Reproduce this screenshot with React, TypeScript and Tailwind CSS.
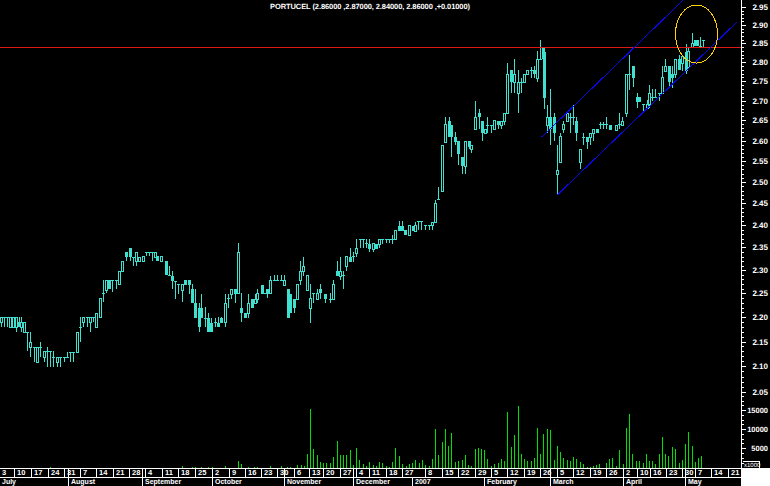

import React from 'react';

type C = [number, number, number, number, number, number];

// [x in zoom px, wick top, wick bottom, body top, body bottom, filled]
const seg1: C[] = [
[4,232,260,232,247,0],[13,232,260,232,232,0],[22,232,260,232,232,0],[31,232,262,232,262,0],[40,232,262,232,262,0],[49,232,275,232,262,0],
[58,232,262,247,262,1],[64,232,275,247,262,0],[73,247,277,247,277,0],[82,277,332,277,277,0],[91,277,350,307,322,0],[103,322,365,322,322,0],
[112,322,365,322,365,0],[121,307,350,322,322,0],[133,334,365,334,350,0],[142,322,380,334,334,0],[151,334,380,334,334,0],[160,334,380,350,350,0],
[172,350,380,350,365,0],[181,350,380,350,350,0],[193,350,365,350,350,0],[202,335,350,350,350,0],[211,335,365,335,335,0],[220,335,365,335,335,0],
[232,277,335,277,335,0],[241,232,305,262,262,0],[250,232,262,232,247,0],[262,232,262,232,232,0],[271,232,275,232,247,0],[280,232,247,232,232,0],
[289,220,262,220,262,0],[301,175,232,175,232,0],[310,120,187,160,160,0],[319,120,160,120,150,0],[328,120,147,120,147,1],[337,120,157,120,120,0],
[349,120,147,120,120,0],[358,93,133,93,133,0],[367,63,93,63,93,0],[379,36,63,36,50,1],[391,24,63,24,50,1],[400,50,78,50,50,0],
[409,36,78,36,63,0],[418,50,63,50,63,0],[430,48,63,48,63,0],[439,36,48,36,36,0],[448,36,48,36,36,0],[457,36,63,36,36,0],
[466,36,50,36,50,0],[472,48,63,48,63,1],[484,48,63,48,63,0],[499,63,106,63,106,1],[508,78,106,106,106,0],[517,93,147,108,122,1],
[526,122,177,122,122,0],[535,132,162,132,132,0],[547,132,187,132,150,0],[556,120,135,120,135,1],[568,120,162,120,135,1],[577,132,190,147,190,1],
[586,147,234,190,234,1],[598,190,275,205,262,1],[604,162,234,205,234,1],[616,202,262,234,234,0],[625,220,277,234,277,1],[634,234,277,250,277,1],
[646,234,262,247,247,0],[655,232,262,250,262,1],[664,232,250,234,250,1],[676,162,260,190,247,0],[685,162,205,175,175,0],[694,148,177,148,162,0],
[706,148,190,148,162,1],[715,9,160,36,160,0],[724,160,245,205,220,1],[736,220,234,220,234,1],[745,162,234,190,220,0],[757,178,205,178,205,1],
[766,162,190,178,190,0],[772,148,190,160,177,0],
];
const seg2: C[] = [
[5,255,282,255,282,1],[13,280,282,280,280,0],[22,267,295,267,282,1],[31,228,280,240,280,0],[43,225,240,240,240,0],[52,225,240,240,240,0],
[64,225,240,240,240,0],[71,225,255,240,255,0],[85,267,353,267,353,1],[91,282,340,282,340,1],[103,297,338,297,325,1],[112,252,297,252,297,0],
[121,183,255,213,240,0],[130,170,228,198,213,0],[142,225,270,225,270,0],[151,252,368,295,323,0],[160,280,308,280,280,0],[172,267,297,280,297,0],
[181,252,297,267,280,1],[195,282,308,282,297,1],[211,280,308,297,297,0],[220,240,297,252,297,0],[232,183,228,213,228,1],[241,171,240,213,228,0],
[250,213,267,225,225,0],[259,168,213,168,198,0],[271,144,185,170,185,1],[280,156,185,168,168,0],[289,118,170,145,158,0],[301,118,145,118,118,0],
[310,118,145,118,118,0],[319,118,145,130,130,0],[328,118,156,132,147,1],[340,130,156,130,147,0],[349,132,147,132,147,1],[358,118,145,118,132,0],
[367,118,132,118,118,0],[379,118,130,118,118,0],[388,118,130,118,118,0],[397,105,132,118,118,0],[406,90,118,90,118,0],[418,63,92,78,92,1],
[427,63,92,78,92,1],[436,90,105,90,105,1],[448,76,105,76,105,0],[460,78,92,78,92,1],[466,66,92,76,92,0],[475,63,90,63,63,0],
[484,63,90,63,63,0],[496,76,90,76,76,0],[508,76,90,76,76,0],[517,66,90,66,76,0],[526,0,66,10,66,0],
];
const seg3: C[] = [
[25,472,510,508,508,0],[37,345,482,345,482,0],[46,262,335,283,335,0],[58,262,320,273,320,1],[64,285,380,285,320,1],[76,305,345,320,335,1],
[85,333,405,333,372,1],[97,380,432,380,408,1],[106,333,432,333,408,0],[118,333,358,333,350,1],[124,345,370,345,358,0],[136,213,297,262,297,0],
[146,237,297,250,262,1],[157,273,333,273,308,1],[166,297,308,297,308,0],[172,262,308,285,285,0],[184,285,308,285,285,0],[193,270,297,270,297,0],
[205,273,297,273,285,1],[214,273,297,273,285,0],[223,250,285,250,273,0],[232,98,250,133,250,0],[244,120,190,120,155,1],[253,87,190,133,155,0],
[265,120,250,155,190,0],[274,145,190,155,155,0],[283,133,155,133,155,0],[292,120,133,120,133,0],[304,110,145,120,120,0],[313,108,145,120,133,1],
[322,63,155,87,145,0],[331,30,87,87,87,0],[340,55,87,55,87,1],[343,65,237,65,203,1],[352,225,310,262,285,0],[361,178,345,262,297,1],
[373,250,333,262,308,1],[382,345,495,420,433,0],[391,310,395,318,395,0],[400,273,310,283,297,0],[412,250,273,250,273,0],[421,250,308,260,260,0],
[430,225,285,260,260,0],[439,262,333,273,308,1],[451,358,417,358,395,0],[460,310,345,320,320,0],[472,320,357,320,335,1],[481,308,345,308,322,0],
[490,297,333,297,308,0],[502,297,310,297,308,1],
];
const seg4: C[] = [
[31,365,388,372,372,0],[40,365,388,372,372,0],[49,352,388,372,372,0],[61,375,390,375,390,1],[79,375,390,375,390,0],[88,340,388,372,372,0],
[97,352,375,362,375,0],[107,222,350,222,338,0],[118,165,270,222,222,0],[130,198,260,198,233,1],[142,280,325,290,305,1],[148,290,305,290,305,1],
[160,313,335,313,313,0],[172,300,325,313,325,0],[178,255,325,280,313,0],[187,268,303,290,290,0],[196,268,290,290,290,0],[208,280,303,280,280,0],
[217,197,280,232,280,0],[226,178,212,198,212,0],[238,198,265,198,245,1],[247,198,265,222,233,1],[256,178,233,178,222,0],[268,165,210,178,210,1],
[277,167,212,167,188,0],[289,132,222,155,212,1],[295,145,200,153,200,0],[307,98,140,130,140,0],[316,120,138,120,138,1],[322,120,138,120,138,1],
[331,112,138,138,138,0],[340,120,140,120,120,0],
];

const candles: { x: number; t: number; b: number; bt: number; bb: number; f: number }[] = [];
const add = (s: C[], ox: number, oy: number) =>
  s.forEach(([zx, t, b, bt, bb, f]) =>
    candles.push({
      x: Math.round(ox + zx / 3),
      t: Math.round(oy + t / 3),
      b: Math.round(oy + b / 3),
      bt: Math.round(oy + bt / 3),
      bb: Math.round(oy + bb / 3),
      f,
    }),
  );
add(seg1, 0, 240);
add(seg2, 260, 200);
add(seg3, 430, 30);
add(seg4, 590, 0);

const vols: [number, number, [number, number][]][] = [
  [0, 400, [[151,201],[547,198],[577,201],[586,201],[604,201],[625,201],[637,201],[676,198],[715,183],[724,192],[745,201],[763,201],[772,201]]],
  [260, 400, [[31,198],[64,198],[82,201],[91,201],[112,195],[124,195],[133,198],[142,162],[151,27],[160,147],[172,165],[181,186],[190,189],[199,189],[211,189],[220,171],[232,123],[241,165],[250,165],[259,165],[271,150],[280,195],[289,144],[298,180],[310,192],[319,198],[328,186],[340,195],[349,198],[358,186],[367,189],[379,198],[388,201],[397,186],[406,144],[418,168],[427,192],[439,198],[448,192],[457,189],[466,180],[478,189],[487,180],[496,195],[508,198],[517,177],[526,87],[535,165],[547,126],[556,87],[565,138],[574,99],[586,186],[595,183],[607,180],[616,165],[625,195],[634,198],[646,147],[655,144],[664,147],[673,150],[682,177],[694,198],[703,192],[715,189],[724,177],[733,183],[742,36]]],
  [510, 400, [[4,140],[13,105],[25,18],[34,162],[43,177],[52,183],[64,183],[73,174],[82,84],[91,162],[100,102],[112,87],[121,90],[133,180],[142,138],[151,156],[160,174],[172,180],[181,183],[190,171],[199,177],[211,186],[220,192],[232,201],[241,201],[250,198],[259,195],[268,192],[289,189],[298,177],[307,174],[319,198],[328,150],[340,192],[349,84],[358,42],[367,162],[379,183],[388,183],[400,189],[409,162],[418,183],[427,183],[436,192],[448,162],[457,111],[466,162],[475,168],[487,141],[496,147],[508,189],[517,180],[526,132],[535,96],[547,138],[556,186],[565,174],[574,168]]],
];

const priceY = (p: number) => Math.round(7 + (Math.log(2.95) - Math.log(p)) * 1057.6);
const priceLabels = ['2.95','2.90','2.85','2.80','2.75','2.70','2.65','2.60','2.55','2.50','2.45','2.40','2.35','2.30','2.25','2.20','2.15','2.10','2.05'];
const minorTicks: number[] = [];
for (let i = 205; i <= 295; i++) if (i % 5 !== 0) minorTicks.push(priceY(i / 100));
const volLabels: [string, number][] = [['15000', 410], ['10000', 429], ['5000', 448]];
const volMinor = [396, 401, 405, 415, 420, 424, 434, 439, 443, 453, 458, 463];

const days: [number, string][] = [
[0,'3'],[14,'10'],[31,'17'],[48,'24'],[64,'31'],[68,''],[80,'7'],[96,'14'],[113,'21'],[129,'28'],[142,''],[145,'4'],[162,'11'],[178,'18'],[195,'25'],[212,'2'],[229,'9'],[245,'16'],[261,'23'],[277,'30'],[284,''],[294,'6'],[309,'13'],[323,'20'],[340,'27'],[353,''],[356,'4'],[369,'11'],[386,'18'],[402,'27'],[425,'8'],[442,'15'],[458,'22'],[475,'29'],[491,'5'],[507,'12'],[524,'19'],[540,'26'],[550,''],[557,'5'],[573,'12'],[590,'19'],[606,'26'],[623,'2'],[637,'10'],[650,'16'],[666,'23'],[682,'30'],[685,''],[695,'7'],[711,'14'],[728,'21'],
];
const months: [number, string][] = [
[0,'July'],[68,'August'],[142,'September'],[212,'October'],[284,'November'],[353,'December'],[412,'2007'],[484,'February'],[550,'March'],[623,'April'],[685,'May'],
];

const TEAL = '#40e0d0';
const font = '"Liberation Sans", Arial, sans-serif';

function Chart() {
  return (
    <svg width={770} height={468} viewBox="0 0 770 468" className="block shrink-0" shapeRendering="crispEdges">
      <text x={370} y={9} textAnchor="middle" fill="#fff" fontFamily={font} fontSize={7.5} fontWeight={700} textLength={200} lengthAdjust="spacing" textRendering="geometricPrecision">
        PORTUCEL (2.86000 ,2.87000, 2.84000, 2.86000 ,+0.01000)
      </text>
      {vols.map(([ox, oy, list]) =>
        list.map(([zx, zy]) => {
          const x = Math.round(ox + zx / 3);
          const y = Math.round(oy + zy / 3);
          return <rect key={`${ox}-${zx}`} x={x} y={y} width={1} height={468 - y} fill="#00e000" />;
        }),
      )}
      {candles.map((c, i) => (
        <g key={i} fill={TEAL}>
          <rect x={c.x} y={c.t} width={1} height={Math.max(c.b - c.t, 1)} />
          {c.bt === c.bb ? (
            <rect x={c.x - 1} y={c.bt} width={3} height={1} />
          ) : c.f ? (
            <rect x={c.x - 1} y={c.bt} width={3} height={c.bb - c.bt} />
          ) : (
            <>
              <rect x={c.x - 1} y={c.bt} width={3} height={c.bb - c.bt + 1} />
              <rect x={c.x} y={c.bt + 1} width={1} height={Math.max(c.bb - c.bt - 1, 0)} fill="#000" />
            </>
          )}
        </g>
      ))}
      <line x1={0} y1={47.5} x2={741} y2={47.5} stroke="#e01818" strokeWidth={1} />
      <line x1={541.7} y1={137} x2={683.3} y2={0} stroke="#0808e8" strokeWidth={1} />
      <line x1={557.3} y1={195} x2={737.3} y2={21.7} stroke="#0808e8" strokeWidth={1} />
      <ellipse cx={696.5} cy={34} rx={21} ry={29} fill="none" stroke="#ffd400" strokeWidth={1} />
      <rect x={741} y={0} width={1} height={468} fill="#fff" />
      {minorTicks.map((y) => (
        <rect key={y} x={741} y={y} width={3} height={1} fill="#fff" />
      ))}
      {volMinor.map((y) => (
        <rect key={`v${y}`} x={741} y={y} width={3} height={1} fill="#fff" />
      ))}
      {priceLabels.map((p) => (
        <g key={p}>
          <rect x={741} y={priceY(parseFloat(p))} width={5} height={1} fill="#fff" />
          <text x={768} y={priceY(parseFloat(p)) + 3} textAnchor="end" fill="#fff" fontFamily={font} fontSize={8} fontWeight={700} textRendering="geometricPrecision">
            {p}
          </text>
        </g>
      ))}
      {volLabels.map(([l, y]) => (
        <g key={l}>
          <rect x={741} y={y} width={5} height={1} fill="#fff" />
          <text x={768} y={y + 3} textAnchor="end" fill="#fff" fontFamily={font} fontSize={7.5} fontWeight={700} textRendering="geometricPrecision">
            {l}
          </text>
        </g>
      ))}
      <rect x={743} y={461} width={16} height={1} fill="#fff" />
      <rect x={759} y={461} width={1} height={7} fill="#fff" />
      <text x={744} y={467} fill="#fff" fontFamily={font} fontSize={6} textRendering="geometricPrecision">
        x1000
      </text>
    </svg>
  );
}

function AxisRow({ items, end, small }: { items: [number, string][]; end: number; small?: boolean }) {
  return (
    <div className="flex h-[9px] border-t border-white overflow-hidden">
      {items.map(([x, label], i) => (
        <div
          key={`${x}-${label}`}
          className={`shrink-0 h-full whitespace-nowrap pl-[2px] leading-[8px] font-bold text-white ${small ? 'text-[7px]' : 'text-[7.5px]'} ${i === 0 ? '' : 'border-l border-white'}`}
          style={{ width: (items[i + 1]?.[0] ?? end) - x }}
        >
          {label}
        </div>
      ))}
    </div>
  );
}

export default function App() {
  return (
    <div className="w-[770px] h-[486px] bg-black flex flex-col overflow-hidden font-['Liberation_Sans',sans-serif]">
      <Chart />
      <div className="flex h-[18px] shrink-0">
        <div className="w-[741px] flex flex-col">
          <AxisRow items={days} end={741} />
          <AxisRow items={months} end={741} small />
        </div>
        <div className="flex-1 bg-white" />
      </div>
    </div>
  );
}
